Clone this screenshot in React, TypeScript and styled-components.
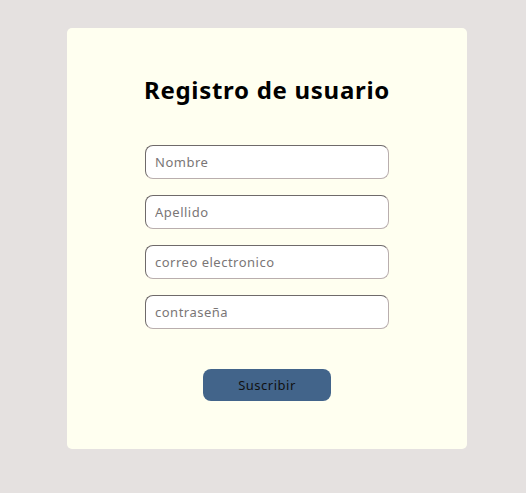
import React from "react";
import styled, { createGlobalStyle } from "styled-components";

const GlobalStyle = createGlobalStyle`
  html, body {
    margin: 0;
    padding: 0;
    background: #e5e1e0;
    font-family: "Noto Sans", "DejaVu Sans", sans-serif;
  }
  * { box-sizing: border-box; }
`;

const Page = styled.div`
  display: flex;
  justify-content: center;
  align-items: flex-start;
  padding-top: 28px;
  padding-left: 8px;
  min-height: 493px;
`;

const Card = styled.form`
  width: 400px;
  background: #fffff0;
  border-radius: 5px;
  padding: 47px 0 48px;
  display: flex;
  flex-direction: column;
  align-items: center;
`;

const Title = styled.h1`
  margin: 0 0 40px;
  font-size: 24px;
  line-height: 30px;
  font-weight: 700;
  letter-spacing: 0.7px;
  color: #000;
`;

const Fields = styled.div`
  display: flex;
  flex-direction: column;
  gap: 16px;
`;

const Input = styled.input`
  width: 244px;
  height: 34px;
  padding: 0 9px;
  border: 1px solid #b9aeae;
  border-top-color: #6f6a6a;
  border-left-color: #6f6a6a;
  border-radius: 8px;
  background: #fff;
  font-family: inherit;
  font-size: 13px;
  letter-spacing: 0.5px;
  color: #333;
  outline: none;
  &::placeholder {
    color: #7a7676;
  }
`;

const Button = styled.button`
  margin-top: 40px;
  width: 128px;
  height: 32px;
  border: none;
  border-radius: 8px;
  background: #42648a;
  color: #111;
  font-family: inherit;
  font-size: 13px;
  letter-spacing: 0.5px;
  cursor: pointer;
`;

export default function App() {
  return (
    <>
      <GlobalStyle />
      <Page>
        <Card onSubmit={(e) => e.preventDefault()}>
          <Title>Registro de usuario</Title>
          <Fields>
            <Input type="text" placeholder="Nombre" />
            <Input type="text" placeholder="Apellido" />
            <Input type="email" placeholder="correo electronico" />
            <Input type="password" placeholder="contraseña" />
          </Fields>
          <Button type="submit">Suscribir</Button>
        </Card>
      </Page>
    </>
  );
}
